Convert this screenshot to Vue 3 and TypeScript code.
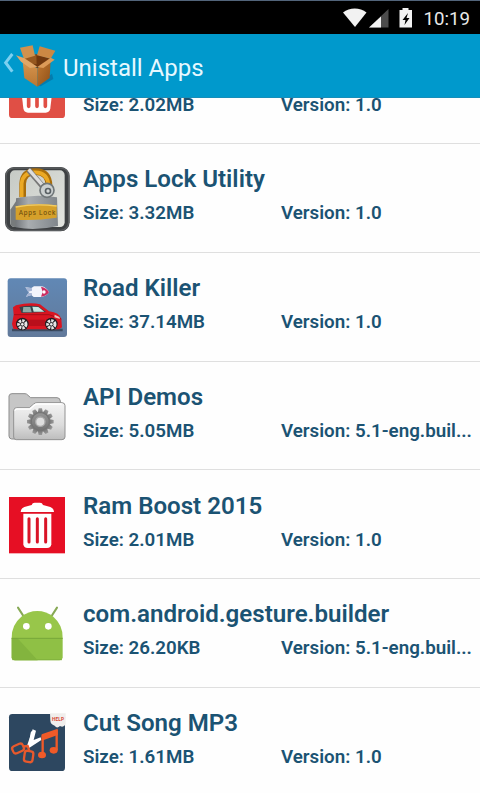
<template>
  <div class="screen">
    <div class="status-bar">
      <svg class="status-icons" viewBox="0 0 75 27" aria-hidden="true">
        <path d="M0 4.5C6.5-1 17-1 23.5 4.5L12 19Z" fill="#f2f2f2" />
        <path d="M45.5 1V19.5H26Z" fill="#4c4c4c" />
        <path d="M38 8.5V19.5H26Z" fill="#f2f2f2" />
        <path d="M59.5 0h6v2h3.5v17.5H56.5V2h3Z" fill="#f2f2f2" />
        <path d="M65 5l-5.500 7h3l-1 5 5-7h-3Z" fill="#000" />
      </svg>
      <span class="clock">10:19</span>
    </div>

    <header class="app-bar">
      <svg class="nav-icon" viewBox="0 0 186 192" aria-hidden="true">
        <defs>
          <linearGradient id="boxLeft" x1="0" y1="0" x2="0" y2="1">
            <stop offset="0" stop-color="#d7954f" />
            <stop offset="1" stop-color="#b97732" />
          </linearGradient>
          <linearGradient id="boxRight" x1="0" y1="0" x2="1" y2="1">
            <stop offset="0" stop-color="#c27a32" />
            <stop offset="1" stop-color="#8f4f17" />
          </linearGradient>
        </defs>
        <path d="M37 73L17 99L37 126" fill="none" stroke="#7cd0f0" stroke-width="9" transform="translate(0 -1)" />
        <g transform="translate(0 7)">
          <path d="M112 157L156 124L160 140L122 162Z" fill="#07699a" opacity=".6" />
          <path d="M68 80L109 66L152 79L112 108Z" fill="#70380e" />
          <path d="M68 80L109 66L110 96L78 92Z" fill="#96581f" />
          <path d="M68 86L112 108V163L73 137Z" fill="url(#boxLeft)" />
          <path d="M112 108L152 84L149 137L112 163Z" fill="url(#boxRight)" />
          <path d="M60 46L98 39L105 70L72 80Z" fill="#d0914d" />
          <path d="M119 42L166 55L152 79L111 69Z" fill="#cb8844" />
          <path d="M48 69L72 77L112 103L90 107L63 88Z" fill="#e1a768" />
          <path d="M152 76L164 82L130 107L112 104Z" fill="#dc9b58" />
        </g>
      </svg>
      <h1 class="app-title">Unistall Apps</h1>
    </header>

    <main class="list">
      <div v-for="app in apps" :key="app.icon" class="row">
        <svg class="icon" :viewBox="`0 ${app.shift} 240 240`" aria-hidden="true">
          <g v-if="app.icon === 'cleaner'">
            <rect x="27" y="98" width="168" height="168" rx="10" fill="#e04f45" />
            <path d="M64 185H157L151 237Q149 250 137 250H84Q72 250 70 237Z" fill="#fff" />
            <path d="M86 190V231M111 190V231M136 190V231" stroke="#e04f45" stroke-width="11" stroke-linecap="round" />
          </g>

          <g v-else-if="app.icon === 'lock'">
            <defs>
              <linearGradient id="plate" x1="0" y1="0" x2="1" y2="1">
                <stop offset="0" stop-color="#c6cac5" />
                <stop offset="1" stop-color="#e3e5e0" />
              </linearGradient>
              <linearGradient id="body" x1="0" y1="0" x2="1" y2="0">
                <stop offset="0" stop-color="#74787c" />
                <stop offset=".3" stop-color="#a9adb0" />
                <stop offset="1" stop-color="#80868b" />
              </linearGradient>
            </defs>
            <rect x="15" y="22" width="194" height="193" rx="27" fill="#3e4143" />
            <rect x="18" y="25" width="188" height="187" rx="24" fill="none" stroke="#5b5e60" stroke-width="4" />
            <rect x="30" y="32" width="164" height="170" rx="14" fill="url(#plate)" />
            <path d="M31 150L50 122V202H42Q31 200 31 189Z" fill="#777b7c" />
            <path d="M68 113V72Q70 35 108 36Q146 37 147 78" fill="none" stroke="#a96e0b" stroke-width="20" />
            <path d="M65 112V71Q69 37 106 38Q143 39 145 76" fill="none" stroke="#eba924" stroke-width="11" />
            <path d="M86 31L127 79" stroke="#777" stroke-width="17" />
            <path d="M86 29L127 76" stroke="#ddd" stroke-width="10" />
            <path d="M48 116Q105 102 171 113L174 199Q105 215 47 203Z" fill="url(#body)" />
            <path d="M47 140Q105 129 170 137V174Q105 184 47 180Z" fill="#d5a02a" />
            <path d="M47 142Q105 131 170 139" fill="none" stroke="#f3cd61" stroke-width="4" />
            <circle cx="141" cy="92" r="21" fill="#cbd0d0" stroke="#6f7678" stroke-width="5" />
            <circle cx="144" cy="94" r="10" fill="#596064" />
            <circle cx="144" cy="94" r="5" fill="#d3d7d7" />
            <text x="56" y="166" class="lock-label" textLength="110">Apps Lock</text>
          </g>

          <g v-else-if="app.icon === 'car'">
            <defs>
              <linearGradient id="sky" x1="0" y1="0" x2="0" y2="1">
                <stop offset="0" stop-color="#6188b5" />
                <stop offset="1" stop-color="#61799a" />
              </linearGradient>
            </defs>
            <rect x="23" y="25" width="178" height="176" rx="9" fill="url(#sky)" />
            <path d="M76 52L94 54L102 49H126Q140 53 147 67Q140 78 125 81H101L94 75L78 80L87 67Z" fill="#f2f4fb" />
            <path d="M76 52L96 55V62L84 65ZM78 80L96 75V70L85 68Z" fill="#a7b6d5" />
            <path d="M123 50Q140 53 147 67Q140 79 123 80L128 66Z" fill="#c92e62" />
            <circle cx="132" cy="66" r="5" fill="#fff" />
            <path d="M36 176H188V184H36Z" fill="#27313f" opacity=".65" />
            <path d="M40 176L36 162L41 134L39 112L48 106Q90 96 120 103L147 124Q179 128 184 147L186 172L177 178H50Z" fill="#d91521" />
            <path d="M58 111Q89 104 115 109L138 126L65 129Z" fill="#35444c" />
            <path d="M70 111H91L95 127H68Z" fill="#8da9a5" />
            <path d="M97 110L115 111L133 125H101Z" fill="#c7e8e0" />
            <path d="M42 134H147L184 147" fill="none" stroke="#a80e17" stroke-width="3" />
            <path d="M83 149H135V168H86Z" fill="#b90f1b" />
            <path d="M164 134L178 141L180 147L163 142Z" fill="#f2bdb8" />
            <g v-for="x in [67, 154]" :key="x">
              <circle :cx="x" cy="162" r="19" fill="#211d22" />
              <circle :cx="x" cy="163" r="11" fill="none" stroke="#e7e5e5" stroke-width="9" stroke-dasharray="7 3" />
              <circle :cx="x" cy="163" r="4" fill="#eee" />
            </g>
          </g>

          <g v-else-if="app.icon === 'folder'">
            <defs>
              <linearGradient id="front" x1="0" y1="0" x2="0" y2="1">
                <stop offset="0" stop-color="#f4f4f4" />
                <stop offset=".6" stop-color="#dcdcdc" />
                <stop offset="1" stop-color="#bdbdbd" />
              </linearGradient>
              <linearGradient id="gear" x1="0" y1="0" x2="0" y2="1">
                <stop offset="0" stop-color="#999" />
                <stop offset="1" stop-color="#707070" />
              </linearGradient>
            </defs>
            <path d="M27 49Q28 42 36 42H75Q80 42 84 47L92 54H171Q180 54 181 64V178H35Q27 177 27 169Z" fill="#c6c6c6" stroke="#8d8d8d" stroke-width="3" />
            <path d="M41 92Q42 84 50 84H88L101 73Q105 69 111 69H187Q195 70 195 78V172Q194 180 186 180H49Q41 180 41 172Z" fill="url(#front)" stroke="#929292" stroke-width="3" />
            <path d="M45 93Q46 88 52 88H90L103 76Q107 73 112 73H185" fill="none" stroke="#fff" stroke-width="4" />
            <g fill="url(#gear)">
              <circle cx="121" cy="126" r="30" />
              <path v-for="n in 12" :key="n" d="M116 86H126L129 101H113Z" :transform="`rotate(${n * 30} 121 126)`" />
            </g>
            <circle cx="121" cy="126" r="14" fill="#dedede" stroke="#aaa" stroke-width="4" />
          </g>

          <g v-else-if="app.icon === 'trash'">
            <rect x="27" y="27" width="168" height="169" fill="#e60f24" />
            <path d="M95 51Q97 44 104 44H120Q127 44 129 51L151 57Q162 62 162 72H62Q62 62 73 57Z" fill="#fff" />
            <path d="M70 77H154V169Q153 180 141 180H83Q71 180 70 169Z" fill="#fff" />
            <path d="M64 74H160" stroke="#d91427" stroke-width="2" />
            <path d="M87 92V162M112 92V162M137 92V162" stroke="#d91427" stroke-width="9" stroke-linecap="round" />
          </g>

          <g v-else-if="app.icon === 'android'">
            <path d="M54 39L69 62M171 39L156 62" stroke="#87a955" stroke-width="6" stroke-linecap="round" />
            <path d="M35 130Q34 91 64 66Q85 49 112 49Q139 49 160 66Q189 91 188 130Z" fill="#98c64a" />
            <path d="M35 130H188V188Q187 197 178 197H45Q35 197 35 188Z" fill="#8fc045" />
            <path d="M35 130H52L113 197H45Q35 197 35 188Z" fill="#83b43e" />
            <path d="M35 131H188" stroke="#78a63a" stroke-width="3" />
            <path d="M37 195H186" stroke="#83b43e" stroke-width="3" />
            <circle cx="79" cy="95" r="10" fill="#fff" />
            <circle cx="145" cy="95" r="10" fill="#fff" />
          </g>

          <g v-else>
            <rect x="27" y="27" width="168" height="171" rx="10" fill="#2d4760" />
            <path d="M150 25H197V58Q190 69 180 63Q171 72 164 62Q151 59 151 46Z" fill="#f0eeec" />
            <text x="156" y="48" class="help-label" textLength="36">HELP</text>
            <path d="M98 73L108 77L101 105L122 97L124 105L86 130L81 122Z" fill="#fff" />
            <path d="M97 84L93 108" stroke="#fff" stroke-width="10" stroke-linecap="round" />
            <g fill="none" stroke="#e8592c" stroke-width="7">
              <rect x="37" y="119" width="34" height="23" rx="8" transform="rotate(-24 54 130)" />
              <rect x="73" y="138" width="26" height="33" rx="8" transform="rotate(8 86 154)" />
              <path d="M69 124L83 123L88 137" />
            </g>
            <path d="M128 151V93L170 79V135" fill="none" stroke="#f05a28" stroke-width="7" />
            <path d="M125 88L173 71V90L125 107Z" fill="#f05a28" />
            <ellipse cx="126" cy="150" rx="12" ry="10" fill="#f05a28" />
            <ellipse cx="161" cy="136" rx="12" ry="10" fill="#f05a28" />
          </g>
        </svg>

        <div class="info">
          <div v-if="app.name" class="name">{{ app.name }}</div>
          <div class="meta">
            <span class="size">Size: {{ app.size }}</span>
            <span class="version">Version: {{ app.version }}</span>
          </div>
        </div>
      </div>
    </main>
  </div>
</template>

<script setup lang="ts">
interface AppItem {
  icon: string
  name?: string
  size: string
  version: string
  // vertical origin of the icon artwork
  shift: number
}

const apps: AppItem[] = [
  { icon: 'cleaner', size: '2.02MB', version: '1.0', shift: 59 },
  { icon: 'lock', name: 'Apps Lock Utility', size: '3.32MB', version: '1.0', shift: -5 },
  { icon: 'car', name: 'Road Killer', size: '37.14MB', version: '1.0', shift: -9 },
  { icon: 'folder', name: 'API Demos', size: '5.05MB', version: '5.1-eng.buil...', shift: -14 },
  { icon: 'trash', name: 'Ram Boost 2015', size: '2.01MB', version: '1.0', shift: -12 },
  { icon: 'android', name: 'com.android.gesture.builder', size: '26.20KB', version: '5.1-eng.buil...', shift: -5 },
  { icon: 'music', name: 'Cut Song MP3', size: '1.61MB', version: '1.0', shift: -9 },
]
</script>

<style>
body {
  margin: 0;
  background: #fff;
}
</style>

<style scoped>
.screen {
  display: flex;
  flex-direction: column;
  width: 480px;
  height: 793px;
  overflow: hidden;
  background: #fefefe;
  font-family: Roboto, "Liberation Sans", sans-serif;
}
.status-bar {
  display: flex;
  flex: none;
  align-items: center;
  justify-content: flex-end;
  box-sizing: border-box;
  height: 34px;
  padding-right: 10px;
  border-top: 1px solid #52647a;
  background: #000;
  color: #e8e8e8;
}
.status-icons {
  width: 75px;
  height: 27px;
  margin: 7px 5px 0 0;
}
.clock {
  font-size: 18.7px;
  line-height: 22px;
  padding-top: 3px;
}
.app-bar {
  display: flex;
  flex: none;
  align-items: center;
  height: 64px;
  background: #0099cc;
  box-shadow: inset 0 -1px #168eb9;
}
.nav-icon {
  flex: none;
  width: 62px;
  height: 64px;
  margin-top: -8px;
}
.app-title {
  margin: 4px 0 0 1px;
  color: #e6f8ff;
  font-size: 24px;
  font-weight: 400;
  line-height: 30px;
}
.list {
  flex: 1;
  min-height: 0;
  overflow: hidden;
}
.row {
  display: flex;
  align-items: center;
  box-sizing: border-box;
  height: 108.75px;
  border-bottom: 1.5px solid #dfdfdf;
}
.row:first-child { margin-top: -62.75px; }
.row:last-child { border-bottom-color: transparent; }
.icon {
  flex: none;
  width: 80px;
  height: 80px;
}
.info {
  display: flex;
  flex: 1;
  flex-direction: column;
  justify-content: flex-end;
  min-width: 0;
  height: 68px;
  padding: 0 0 3px 3px;
  color: #1b5373;
}
.name {
  height: 34px;
  font-size: 24.1px;
  font-weight: 600;
  line-height: 34px;
  white-space: nowrap;
}
.meta {
  display: grid;
  grid-template-columns: 198px 1fr;
  font-size: 18.75px;
  font-weight: 600;
  line-height: 34px;
  white-space: nowrap;
}
.lock-label {
  fill: #65470b;
  font-size: 20px;
}
.help-label {
  fill: #d54535;
  font-size: 14px;
  font-weight: 700;
}
</style>
